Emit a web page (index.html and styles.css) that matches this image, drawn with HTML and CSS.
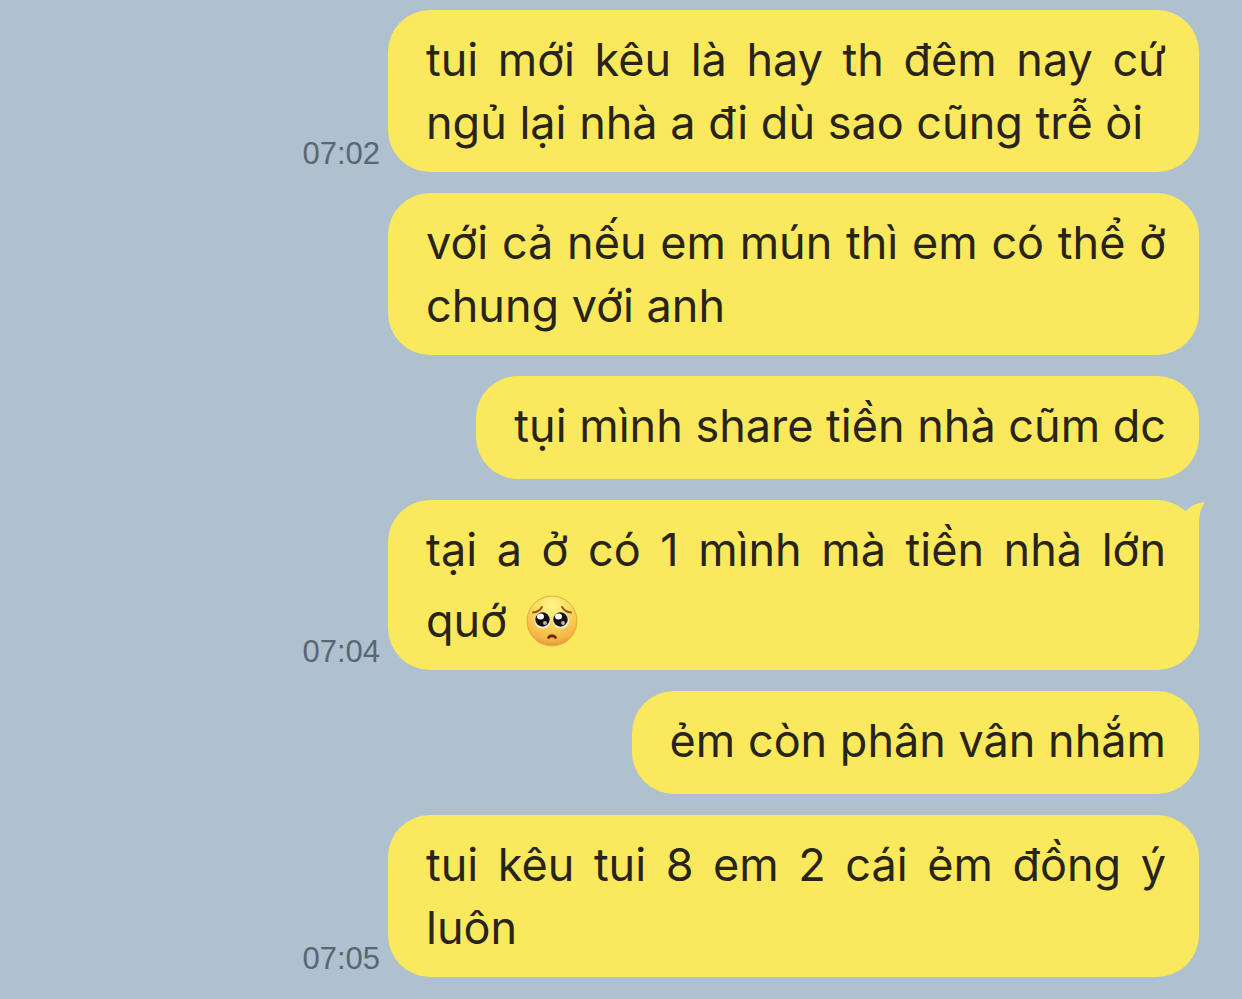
FILE: index.html
```html
<!DOCTYPE html>
<html lang="vi">
<head>
  <meta charset="UTF-8">
  <meta name="viewport" content="width=device-width, initial-scale=1.0">
  <title>Chat</title>
  <link rel="stylesheet" href="styles.css">
</head>
<body>
  <main class="chat">
    <div class="message">
      <time class="time">07:02</time>
      <div class="bubble"><p>tui mới kêu là hay th đêm nay cứ ngủ lại nhà a đi dù sao cũng trễ òi</p></div>
    </div>

    <div class="message">
      <div class="bubble"><p>với cả nếu em mún thì em có thể ở chung với anh</p></div>
    </div>

    <div class="message">
      <div class="bubble"><p>tụi mình share tiền nhà cũm dc</p></div>
    </div>

    <div class="message">
      <time class="time">07:04</time>
      <div class="bubble">
        <!-- Bubble tail -->
        <svg class="tail" width="22" height="44" viewBox="0 0 22 44" aria-hidden="true">
          <path d="M0 44V13L4 10Q11 3 22 2Q16 10 16 24V44Z" fill="#fbe95d"/>
        </svg>
        <p>tại a ở có 1 mình mà tiền nhà lớn quớ
          <svg class="emoji" viewBox="0 0 52 52" role="img" aria-label="pleading face">
            <defs>
              <radialGradient id="face" cx="50%" cy="20%" r="84%">
                <stop offset="0" stop-color="#fff58c"/>
                <stop offset="0.4" stop-color="#fddd60"/>
                <stop offset="0.8" stop-color="#f6b546"/>
                <stop offset="1" stop-color="#df9232"/>
              </radialGradient>
            </defs>
            <circle cx="26" cy="26" r="25" fill="url(#face)" stroke="#e5ac42" stroke-width="1"/>
            <path d="M7 17.500Q13 17 16 12M45 17.500Q39 17 36 12" fill="none" stroke="#8a5518" stroke-width="2" stroke-linecap="round"/>
            <circle cx="16.500" cy="25.500" r="8" fill="#f4eee4"/>
            <circle cx="35" cy="25.500" r="8" fill="#f4eee4"/>
            <circle cx="16.500" cy="24.500" r="7.200" fill="#17120f"/>
            <circle cx="34.500" cy="24.500" r="7.200" fill="#17120f"/>
            <ellipse cx="14.500" cy="21.500" rx="3.500" ry="3" fill="#fff"/>
            <ellipse cx="32.500" cy="21.500" rx="3.500" ry="3" fill="#fff"/>
            <circle cx="19" cy="28" r="2" fill="#b9b4b0"/>
            <circle cx="37" cy="28" r="2" fill="#b9b4b0"/>
            <path d="M22.500 42.500Q26 39 29.500 42.500" fill="none" stroke="#6d2410" stroke-width="2.600" stroke-linecap="round"/>
          </svg></p>
      </div>
    </div>

    <div class="message">
      <div class="bubble"><p>ẻm còn phân vân nhắm</p></div>
    </div>

    <div class="message">
      <time class="time">07:05</time>
      <div class="bubble"><p>tui kêu tui 8 em 2 cái ẻm đồng ý luôn</p></div>
    </div>
  </main>
</body>
</html>
```
FILE: styles.css
```css
body {
  margin: 0;
  background: #afc0cf;
  color: #29241a;
  font-family: Inter, "Liberation Sans", Arial, sans-serif;
}
.chat {
  display: flex;
  flex-direction: column;
  gap: 21px;
  padding: 10px 43px 21px;
}
.message {
  display: flex;
  justify-content: flex-end;
  align-items: flex-end;
  gap: 8px;
}
.time {
  color: #596773;
  font-family: "Liberation Sans", Arial, sans-serif;
  font-size: 31px;
  line-height: 36px;
}
.bubble {
  position: relative;
  box-sizing: border-box;
  max-width: 811px;
  min-height: 103px;
  padding: 18px 33px 18px 38px;
  border-radius: 42px;
  background: #fbe95d;
}
.bubble p {
  margin: 0;
  font-size: 45px;
  line-height: 63px;
  text-align: justify;
}
.tail {
  position: absolute;
  top: 0;
  right: -6px;
}
.emoji {
  width: 52px;
  height: 52px;
  margin: 14px 6px 0;
  vertical-align: -10px;
}
```
